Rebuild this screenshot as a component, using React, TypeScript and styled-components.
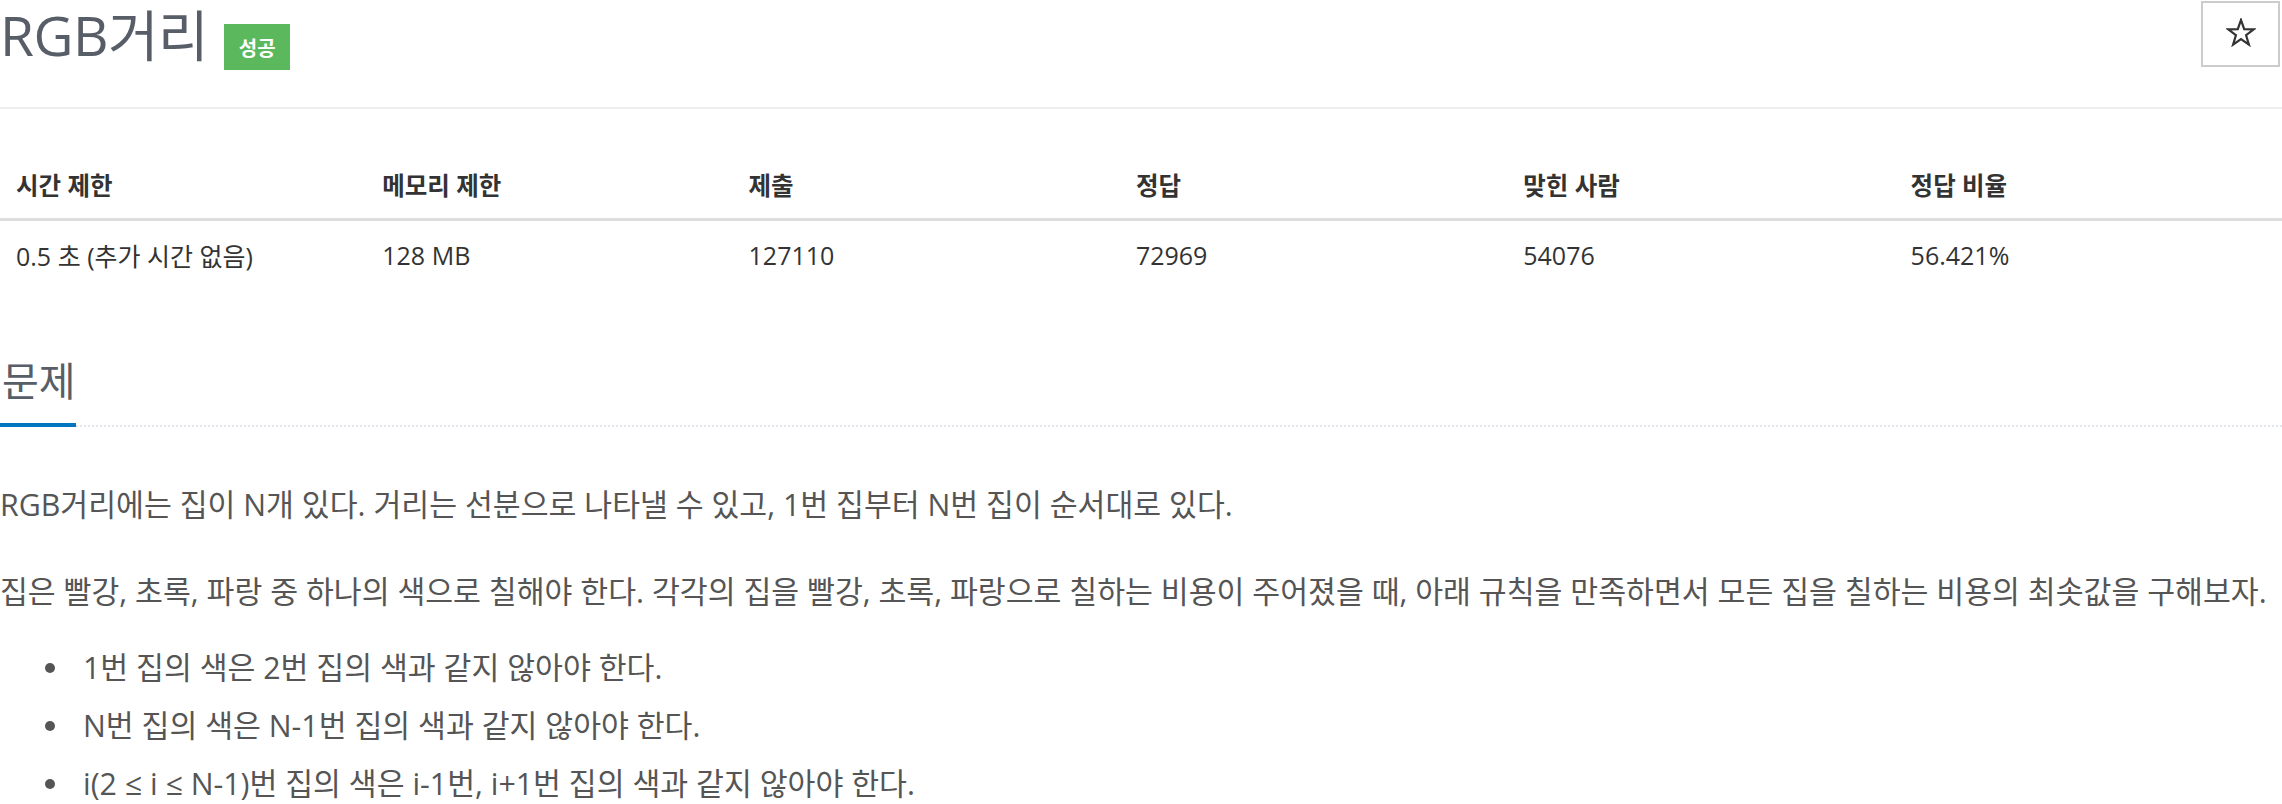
import React from 'react';
import styled, { createGlobalStyle } from 'styled-components';

const GlobalStyle = createGlobalStyle`
  html, body {
    margin: 0;
    padding: 0;
    background: #fff;
  }
  body {
    font-family: "Open Sans", "Noto Sans CJK KR", sans-serif;
    color: #333;
  }
`;

const Page = styled.div`
  width: 2282px;
  display: flex;
  flex-direction: column;
`;

const Header = styled.header`
  height: 107px;
  display: flex;
  justify-content: space-between;
  align-items: flex-start;
  border-bottom: 2px solid #eee;
`;

const TitleGroup = styled.div`
  display: flex;
  align-items: flex-start;
  gap: 16px;
`;

const Title = styled.h1`
  margin: 2px 0 0 0;
  font-size: 55px;
  line-height: 66px;
  font-weight: 400;
  color: #585e67;
  letter-spacing: -0.5px;
`;

const Badge = styled.span<{ tone: string }>`
  margin-top: 24px;
  width: 66px;
  height: 46px;
  display: flex;
  align-items: center;
  justify-content: center;
  background: ${p => p.tone};
  color: #fff;
  font-size: 20px;
  font-weight: 700;
`;

const StarButton = styled.button`
  margin: 1px 2px 0 0;
  width: 79px;
  height: 66px;
  border: 2px solid #ccc;
  background: #fff;
  display: flex;
  align-items: center;
  justify-content: center;
  padding: 0 0 4px 0;
  cursor: pointer;
`;

const InfoTable = styled.table`
  margin-top: 41px;
  width: 100%;
  table-layout: fixed;
  border-collapse: collapse;
`;

const HeadCell = styled.th<{ w: string }>`
  width: ${p => p.w};
  height: 68px;
  padding: 0 16px;
  text-align: left;
  font-size: 24.5px;
  font-weight: 700;
  color: #333;
  border-bottom: 3px solid #ddd;
`;

const Cell = styled.td`
  height: 68px;
  padding: 0 16px;
  font-size: 25px;
  color: #333;
`;

const Section = styled.section`
  margin-top: 70px;
  display: flex;
  flex-direction: column;
`;

const Headline = styled.div`
  border-bottom: 2px dotted #e2e6ea;
  display: flex;
`;

const HeadlineText = styled.h2`
  margin: 0 0 -2px 0;
  padding: 0 0 20px 2px;
  font-size: 40px;
  line-height: 44px;
  font-weight: 400;
  color: #585e67;
  border-bottom: 4px solid #0076c0;
`;

const Paragraph = styled.p<{ gap: number }>`
  margin: ${p => p.gap}px 0 0 0;
  font-size: 30.3px;
  line-height: 40px;
  color: #555;
`;

const RuleList = styled.ul`
  list-style: none;
  margin: 36px 0 0 0;
  padding: 0;
  display: flex;
  flex-direction: column;
  gap: 18px;
`;

const RuleItem = styled.li`
  height: 40px;
  display: flex;
  align-items: center;
  font-size: 30.3px;
  line-height: 40px;
  color: #555;
`;

const Dot = styled.span`
  width: 10px;
  height: 10px;
  border-radius: 50%;
  background: #555;
  margin: 0 28px 0 45px;
  flex: none;
`;

const StarIcon: React.FC = () => (
  <svg width="30" height="29" viewBox="0 0 30 29" aria-hidden="true">
    <polygon
      points="15,2 18.2,11.2 27.8,11.4 20.1,17.2 22.9,26.6 15,21 7.1,26.6 9.9,17.2 2.2,11.4 11.8,11.2"
      fill="none"
      stroke="#333"
      strokeWidth="2.2"
      strokeLinejoin="miter"
    />
  </svg>
);

const columns = [
  { label: '시간 제한', value: '0.5 초 (추가 시간 없음)', w: '16%' },
  { label: '메모리 제한', value: '128 MB', w: '16%' },
  { label: '제출', value: '127110', w: '17%' },
  { label: '정답', value: '72969', w: '17%' },
  { label: '맞힌 사람', value: '54076', w: '17%' },
  { label: '정답 비율', value: '56.421%', w: '17%' },
];

const rules = [
  '1번 집의 색은 2번 집의 색과 같지 않아야 한다.',
  'N번 집의 색은 N-1번 집의 색과 같지 않아야 한다.',
  'i(2 ≤ i ≤ N-1)번 집의 색은 i-1번, i+1번 집의 색과 같지 않아야 한다.',
];

const App: React.FC = () => {
  return (
    <>
      <GlobalStyle />
      <Page>
        <Header>
          <TitleGroup>
            <Title>RGB거리</Title>
            <Badge tone="#5cb85c">성공</Badge>
          </TitleGroup>
          <StarButton aria-label="즐겨찾기">
            <StarIcon />
          </StarButton>
        </Header>

        <InfoTable>
          <thead>
            <tr>
              {columns.map(c => (
                <HeadCell key={c.label} w={c.w}>{c.label}</HeadCell>
              ))}
            </tr>
          </thead>
          <tbody>
            <tr>
              {columns.map(c => (
                <Cell key={c.label}>{c.value}</Cell>
              ))}
            </tr>
          </tbody>
        </InfoTable>

        <Section>
          <Headline>
            <HeadlineText>문제</HeadlineText>
          </Headline>
          <Paragraph gap={58}>
            RGB거리에는 집이 N개 있다. 거리는 선분으로 나타낼 수 있고, 1번 집부터 N번 집이 순서대로 있다.
          </Paragraph>
          <Paragraph gap={47}>
            집은 빨강, 초록, 파랑 중 하나의 색으로 칠해야 한다. 각각의 집을 빨강, 초록, 파랑으로 칠하는 비용이 주어졌을 때, 아래 규칙을 만족하면서 모든 집을 칠하는 비용의 최솟값을 구해보자.
          </Paragraph>
          <RuleList>
            {rules.map(r => (
              <RuleItem key={r}>
                <Dot />
                {r}
              </RuleItem>
            ))}
          </RuleList>
        </Section>
      </Page>
    </>
  );
};

export default App;
